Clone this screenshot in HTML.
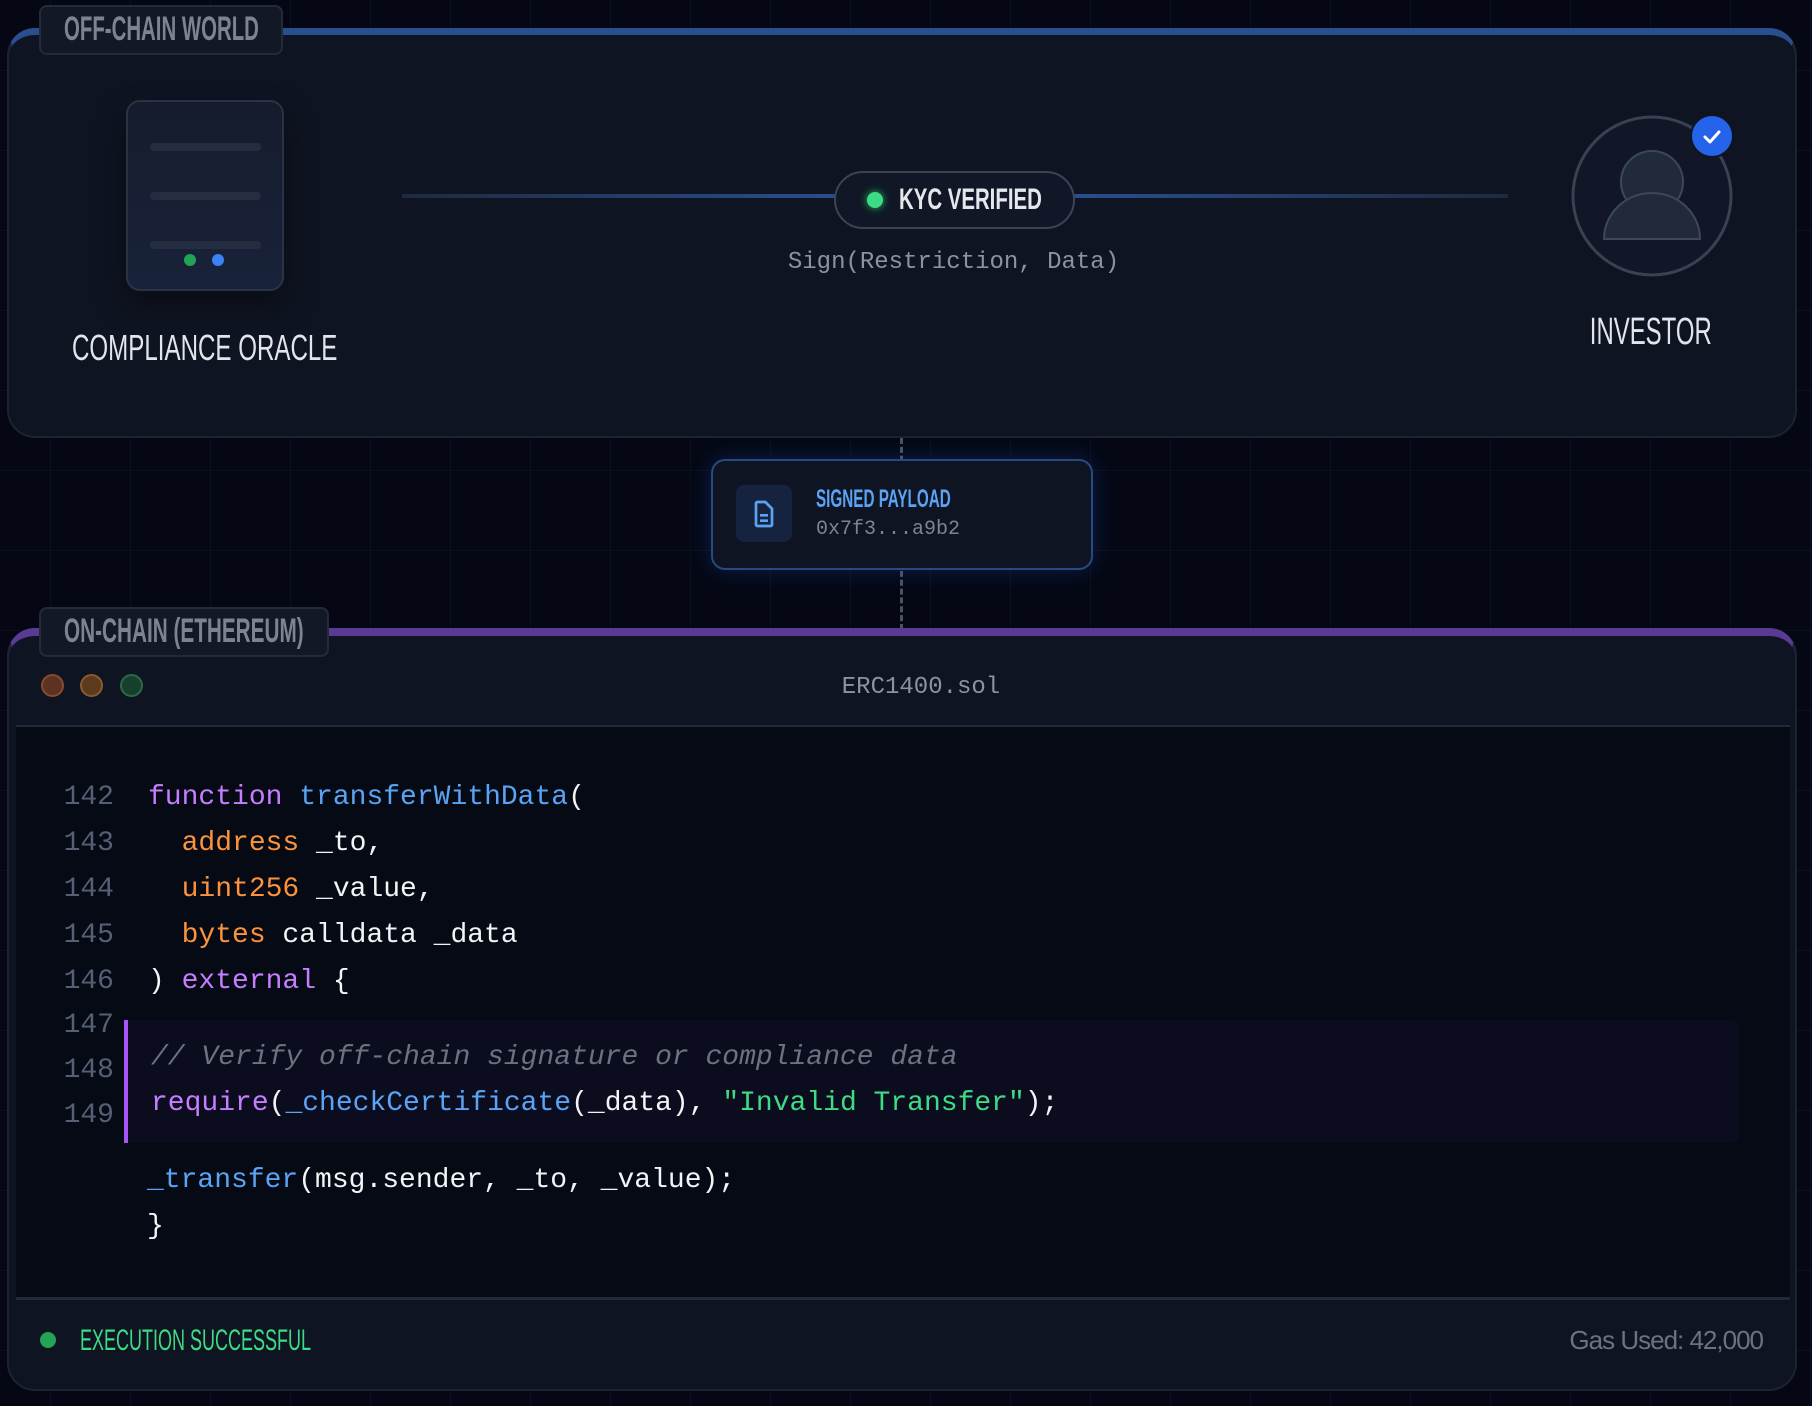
<!DOCTYPE html>
<html><head><meta charset="utf-8"><style>
*{margin:0;padding:0;box-sizing:border-box}
body{width:1812px;height:1406px;overflow:hidden;background:#050814;position:relative;font-family:"Liberation Sans",sans-serif;
background-image:linear-gradient(rgba(40,50,80,.18) 1px,transparent 1px),linear-gradient(90deg,rgba(40,50,80,.18) 1px,transparent 1px);background-size:80px 80px;background-position:-30px -10px}
.abs{position:absolute}
.cond{display:inline-block;transform-origin:center;font-weight:bold;white-space:nowrap}
.mono{font-family:"Liberation Mono",monospace}
.panel{position:absolute;left:7px;width:1790px;background:#0f1422;border:2px solid #1c2333;border-radius:28px}
.tab{position:absolute;background:#121826;border:2px solid #232b3b;border-radius:8px;color:#7c8494;text-align:left;line-height:45px;padding-left:23px;white-space:nowrap;overflow:visible}
.tab .cond{transform-origin:left}
.code{font-size:28px;line-height:46px;color:#f3f4f6;white-space:pre}
.ln{position:absolute;left:40px;width:74px;text-align:right;color:#566074;font-size:28px}
.k{color:#c77dff}.f{color:#5aa3f5}.t{color:#fb923c}.s{color:#3ddc84}.c{color:#6b7280;font-style:italic}
</style></head><body>

<!-- top panel -->
<div class="panel" style="top:28px;height:410px;border-top:7px solid #2a4f8f"></div>
<div class="tab" style="left:39px;top:5px;width:244px;height:50px"><span class="cond" style="font-size:34px;transform:scaleX(.6)">OFF-CHAIN WORLD</span></div>

<!-- server -->
<div class="abs" style="left:126px;top:100px;width:158px;height:191px;border:2px solid #2a3345;border-radius:14px;background:linear-gradient(#151c2c,#18223a);box-shadow:0 14px 30px rgba(0,0,0,.4)"></div>
<div class="abs" style="left:150px;top:143px;width:111px;height:8px;background:#252e40;border-radius:4px"></div>
<div class="abs" style="left:150px;top:192px;width:111px;height:8px;background:#252e40;border-radius:4px"></div>
<div class="abs" style="left:150px;top:241px;width:111px;height:8px;background:#252e40;border-radius:4px"></div>
<div class="abs" style="left:184px;top:254px;width:12px;height:12px;background:#22a356;border-radius:50%"></div>
<div class="abs" style="left:212px;top:254px;width:12px;height:12px;background:#3b82f6;border-radius:50%"></div>
<div class="abs" style="left:72px;top:327px;color:#e2e5ec;font-size:36px;white-space:nowrap"><span class="cond" style="font-weight:normal;transform-origin:left;transform:scaleX(.67)">COMPLIANCE ORACLE</span></div>

<!-- line -->
<div class="abs" style="left:402px;top:194px;width:1106px;height:4px;background:linear-gradient(90deg,#1f2a3e,#2a4f8f 40%,#2a4f8f 60%,#1f2a3e)"></div>
<div class="abs" style="left:834px;top:171px;width:241px;height:58px;border:2px solid #3a4456;border-radius:29px;background:#111726"></div>
<div class="abs" style="left:867px;top:192px;width:16px;height:16px;background:#3ddc84;border-radius:50%;box-shadow:0 0 8px #22c55e"></div>
<div class="abs" style="left:899px;top:182px;color:#e5e7eb;font-size:30px;line-height:36px;white-space:nowrap"><span class="cond" style="transform-origin:left;transform:scaleX(.68)">KYC VERIFIED</span></div>
<div class="abs mono" style="left:700px;top:249px;width:507px;text-align:center;color:#8a93a3;font-size:24px">Sign(Restriction, Data)</div>

<!-- investor -->
<svg class="abs" style="left:1560px;top:100px" width="200" height="200" viewBox="1560 100 200 200">
<circle cx="1652" cy="196" r="79" fill="#111726" stroke="#394253" stroke-width="3"/>
<circle cx="1652" cy="182" r="31" fill="#202a3a" stroke="#3d4758" stroke-width="2"/>
<path d="M1604 239 A48 46 0 0 1 1700 239 Z" fill="#202a3a" stroke="#3d4758" stroke-width="2"/>
<circle cx="1712" cy="136" r="22" fill="#0f1422"/>
<circle cx="1712" cy="136" r="20" fill="#2563eb"/>
<path d="M1705 137 l5 5 l9 -10" fill="none" stroke="#fff" stroke-width="3" stroke-linecap="round" stroke-linejoin="round"/>
</svg>
<div class="abs" style="left:1500px;top:311px;width:302px;text-align:center;color:#e2e5ec;font-size:38px"><span class="cond" style="font-weight:normal;transform:scaleX(.63)">INVESTOR</span></div>

<!-- dashed connector -->
<div class="abs" style="left:900px;top:438px;width:0;height:192px;border-left:3px dashed #4a5366"></div>

<!-- payload -->
<div class="abs" style="left:711px;top:459px;width:382px;height:111px;border:2px solid #284a82;border-radius:14px;background:#0f1422;box-shadow:0 0 24px rgba(37,99,235,.25)"></div>
<div class="abs" style="left:736px;top:485px;width:56px;height:57px;background:#15233f;border-radius:8px"></div>
<svg class="abs" style="left:748px;top:498px" width="32" height="32" viewBox="0 0 24 24" fill="none" stroke="#5aa3f5" stroke-width="2" stroke-linejoin="round"><path d="M7 3h6l5 5v12a1 1 0 0 1-1 1H7a1 1 0 0 1-1-1V4a1 1 0 0 1 1-1z"/><path d="M9 13h6M9 17h6"/></svg>
<div class="abs" style="left:816px;top:484px;color:#5aa3f5;font-size:25px;line-height:30px;white-space:nowrap"><span class="cond" style="transform-origin:left;transform:scaleX(.61)">SIGNED PAYLOAD</span></div>
<div class="abs mono" style="left:816px;top:518px;color:#7c8494;font-size:20px">0x7f3...a9b2</div>

<!-- bottom panel -->
<div class="panel" style="top:628px;height:763px;border-top:8px solid #5b3a96;overflow:hidden">
 <div class="abs" style="left:7px;top:89px;width:1774px;height:575px;background:#050a14;border-top:2px solid #222a3a;border-bottom:3px solid #222a3a"></div>
</div>
<div class="tab" style="left:39px;top:607px;width:290px;height:50px"><span class="cond" style="font-size:34px;transform:scaleX(.61)">ON-CHAIN (ETHEREUM)</span></div>
<div class="abs" style="left:41px;top:674px;width:23px;height:23px;border-radius:50%;background:#5c3222;border:2px solid #8a4a2f"></div>
<div class="abs" style="left:80px;top:674px;width:23px;height:23px;border-radius:50%;background:#5c3a1e;border:2px solid #8a5a2f"></div>
<div class="abs" style="left:120px;top:674px;width:23px;height:23px;border-radius:50%;background:#16402c;border:2px solid #2a6a48"></div>
<div class="abs mono" style="left:720px;top:674px;width:402px;text-align:center;color:#8a93a3;font-size:24px">ERC1400.sol</div>

<!-- code -->
<div class="ln mono" style="top:775px;line-height:46px">142<br>143<br>144<br>145<br>146</div>
<div class="abs mono code" style="left:148px;top:775px"><span class="k">function</span> <span class="f">transferWithData</span>(
  <span class="t">address</span> _to,
  <span class="t">uint256</span> _value,
  <span class="t">bytes</span> calldata _data
) <span class="k">external</span> {</div>
<div class="abs" style="left:124px;top:1020px;width:1615px;height:123px;background:#0c0c1f;border-left:4px solid #a855f7;border-radius:0 8px 8px 0"></div>
<div class="ln mono" style="top:1003px;line-height:45px">147<br>148<br>149</div>
<div class="abs mono code" style="left:151px;top:1035px"><span class="c">// Verify off-chain signature or compliance data</span>
<span class="k">require</span>(<span class="f">_checkCertificate</span>(_data), <span class="s">"Invalid Transfer"</span>);</div>
<div class="abs mono code" style="left:147px;top:1158px"><span class="f">_transfer</span>(msg.sender, _to, _value);
}</div>

<!-- footer -->
<div class="abs" style="left:40px;top:1332px;width:16px;height:16px;border-radius:50%;background:#22a356"></div>
<div class="abs" style="left:80px;top:1322px;color:#3ddc84;font-size:30px;line-height:38px;white-space:nowrap"><span class="cond" style="font-weight:normal;transform-origin:left;transform:scaleX(.6)">EXECUTION SUCCESSFUL</span></div>
<div class="abs" style="left:500px;top:1325px;width:1263px;text-align:right;color:#6b7280;font-size:26px;letter-spacing:-1px">Gas Used: 42,000</div>
</body></html>
